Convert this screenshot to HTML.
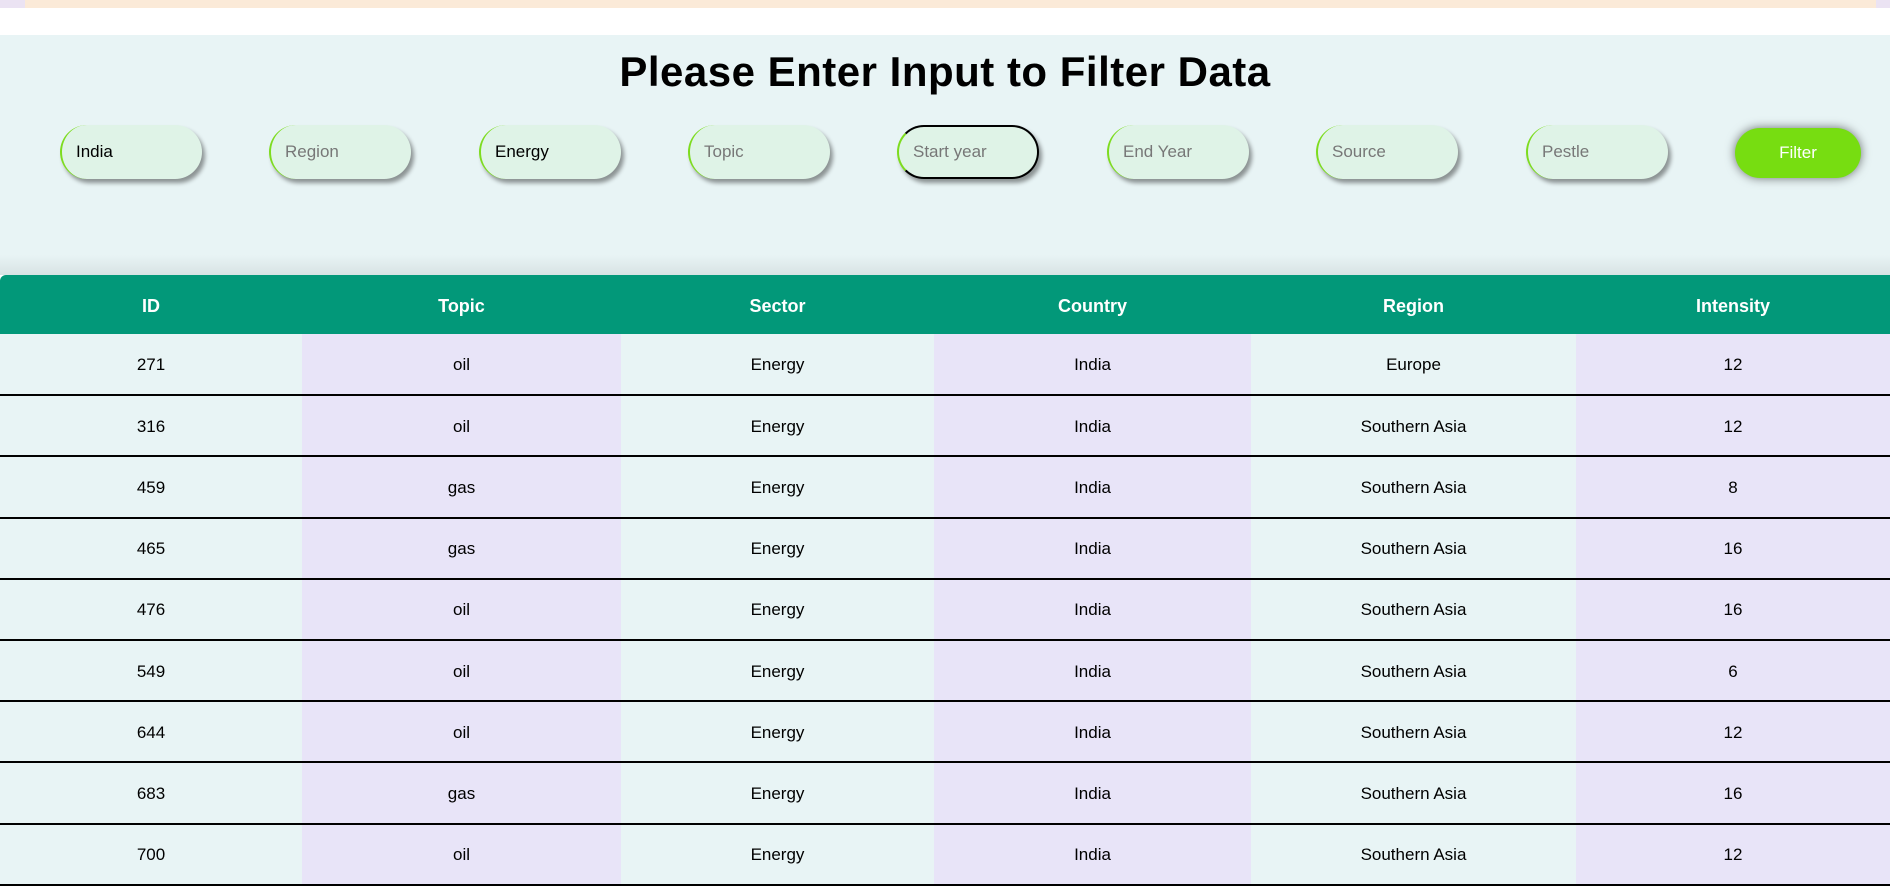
<!DOCTYPE html>
<html><head><meta charset="utf-8">
<style>
*{box-sizing:border-box;margin:0;padding:0}
html,body{width:1890px;height:841px;overflow:hidden;background:#fff;font-family:"Liberation Sans",sans-serif}
.top{position:absolute;left:0;top:0;width:1890px;height:8px;background:#fbead8}
.top .l{position:absolute;left:0;top:0;width:25px;height:8px;background:#ebe3f3}
.top .r{position:absolute;right:0;top:0;width:14px;height:8px;background:#ebe3f3}
.sec{position:absolute;left:0;top:35px;width:1890px;height:240px;background:#e8f4f5}
h1{position:absolute;top:48px;left:0;width:1890px;text-align:center;font-size:42px;font-weight:bold;color:#000;letter-spacing:0.5px}
.in{position:absolute;top:125px;width:142px;height:54px;border-radius:27px;background:#dff3e7;border-left:2px solid #7ddc1f;box-shadow:3px 4px 4px rgba(0,0,0,0.4);font-size:17px;padding-left:14px;line-height:54px;color:#777}
.in.v{color:#000}
.in.f{border:2px solid #000;border-left:2px solid #7ddc1f;line-height:50px}
.btn{position:absolute;left:1735px;top:128px;width:126px;height:50px;border-radius:25px;background:#77dd11;color:#fff;font-size:17px;text-align:center;line-height:50px;box-shadow:0 0 10px rgba(0,0,0,0.55)}
.shade{position:absolute;left:0;top:255px;width:1890px;height:20px;background:linear-gradient(#e8f4f5,#d8e3e4)}
table{position:absolute;left:0;top:275px;width:1890px;border-collapse:collapse;table-layout:fixed}
th{height:59px;background:#029879;color:#fff;font-size:18px;font-weight:bold;padding-top:3px}
th:first-child{border-top-left-radius:6px}
td{height:61.2px;text-align:center;font-size:17px;color:#000;border-bottom:2px solid #000;padding-top:2px}
td:nth-child(odd){background:#e8f4f5}
td:nth-child(even){background:#e8e4f8}
</style></head><body>
<div class="top"><div class="l"></div><div class="r"></div></div>
<div class="sec"></div>
<h1>Please Enter Input to Filter Data</h1>
<div class="in v" style="left:60px">India</div>
<div class="in" style="left:269px">Region</div>
<div class="in v" style="left:479px">Energy</div>
<div class="in" style="left:688px">Topic</div>
<div class="in f" style="left:897px">Start year</div>
<div class="in" style="left:1107px">End Year</div>
<div class="in" style="left:1316px">Source</div>
<div class="in" style="left:1526px">Pestle</div>
<div class="btn">Filter</div>
<div class="shade"></div>
<table>
<colgroup><col style="width:302px"><col style="width:319px"><col style="width:313px"><col style="width:317px"><col style="width:325px"><col style="width:314px"></colgroup>
<tr><th>ID</th><th>Topic</th><th>Sector</th><th>Country</th><th>Region</th><th>Intensity</th></tr>
<tr><td>271</td><td>oil</td><td>Energy</td><td>India</td><td>Europe</td><td>12</td></tr>
<tr><td>316</td><td>oil</td><td>Energy</td><td>India</td><td>Southern Asia</td><td>12</td></tr>
<tr><td>459</td><td>gas</td><td>Energy</td><td>India</td><td>Southern Asia</td><td>8</td></tr>
<tr><td>465</td><td>gas</td><td>Energy</td><td>India</td><td>Southern Asia</td><td>16</td></tr>
<tr><td>476</td><td>oil</td><td>Energy</td><td>India</td><td>Southern Asia</td><td>16</td></tr>
<tr><td>549</td><td>oil</td><td>Energy</td><td>India</td><td>Southern Asia</td><td>6</td></tr>
<tr><td>644</td><td>oil</td><td>Energy</td><td>India</td><td>Southern Asia</td><td>12</td></tr>
<tr><td>683</td><td>gas</td><td>Energy</td><td>India</td><td>Southern Asia</td><td>16</td></tr>
<tr><td>700</td><td>oil</td><td>Energy</td><td>India</td><td>Southern Asia</td><td>12</td></tr>
</table>
</body></html>
